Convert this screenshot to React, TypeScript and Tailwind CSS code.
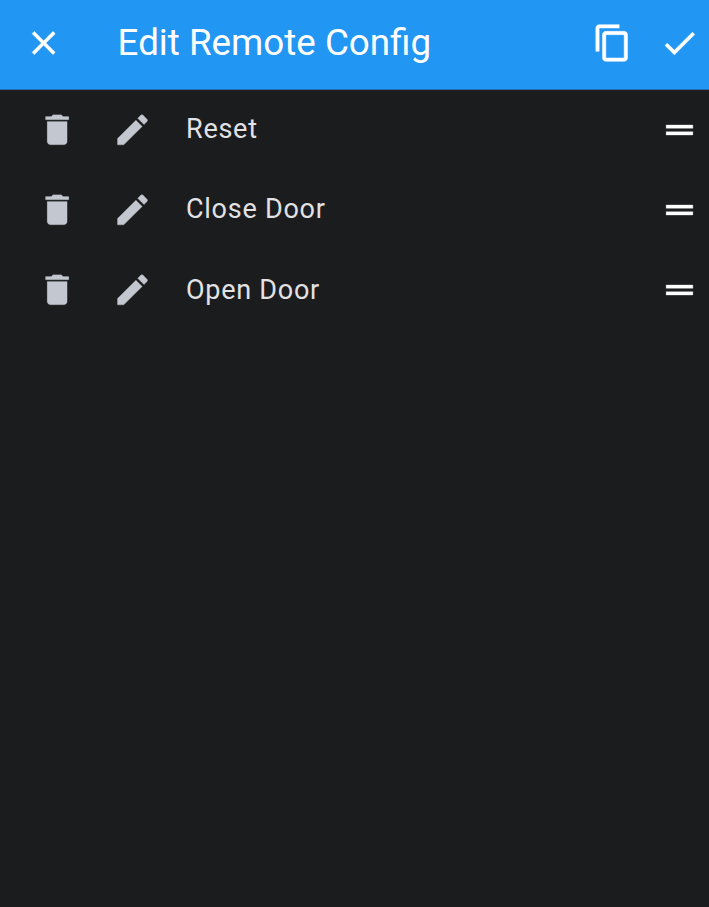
const paths = {
  close: "M19 6.41L17.59 5 12 10.59 6.41 5 5 6.41 10.59 12 5 17.59 6.41 19 12 13.41 17.59 19 19 17.59 13.41 12z",
  copy: "M16 1H4c-1.1 0-2 .9-2 2v14h2V3h12V1zm3 4H8c-1.1 0-2 .9-2 2v14c0 1.1.9 2 2 2h11c1.1 0 2-.9 2-2V7c0-1.1-.9-2-2-2zm0 16H8V7h11v14z",
  check: "M9 16.17L4.83 12l-1.42 1.41L9 19 21 7l-1.41-1.41z",
  trash: "M6 19c0 1.1.9 2 2 2h8c1.1 0 2-.9 2-2V7H6v12zM19 4h-3.5l-1-1h-5l-1 1H5v2h14V4z",
  edit: "M3 17.25V21h3.75L17.81 9.94l-3.75-3.75L3 17.25zM20.71 7.04c.39-.39.39-1.02 0-1.41l-2.34-2.34c-.39-.39-1.02-.39-1.41 0l-1.83 1.83 3.75 3.75 1.83-1.83z",
  handle: "M20 9H4v2h16V9zM4 15h16v-2H4v2z",
};

function Icon({ name, className, viewBox = "0 0 24 24" }: { name: keyof typeof paths; className: string; viewBox?: string }) {
  return (
    <svg viewBox={viewBox} fill="currentColor" className={`shrink-0 ${className}`}>
      <path d={paths[name]} />
    </svg>
  );
}

const items = ["Reset", "Close Door", "Open Door"];

export default function App() {
  return (
    <div className="h-[907px] w-full overflow-hidden bg-[#1b1c1e] font-[Roboto,sans-serif]">
      <header className="flex h-[90px] items-center border-b border-[#1e6dae] bg-[#2196f3] pb-[3px] pl-[24px] pr-[9px] text-white">
        <Icon name="close" viewBox="0.2 0 24 24" className="size-10 stroke-white stroke-[0.15]" />
        <h1 className="ml-[53.6px] flex-1 whitespace-nowrap text-[36.75px] leading-[44px]">Edit Remote Config</h1>
        <Icon name="copy" viewBox="-0.3 0 24 24" className="mr-[26.6px] size-10 stroke-white stroke-[0.3]" />
        <Icon name="check" viewBox="0 0.3 24 24" className="size-[41px] stroke-white stroke-[0.1]" />
      </header>
      <ul className="-mt-px">
        {items.map((item) => (
          <li key={item} className="flex h-[80.3px] items-center pl-[37px] pr-[10px] text-[#c3c7cf]">
            <Icon name="trash" viewBox="-0.1 0.1 24 24" className="mt-[1.2px] size-10 stroke-current stroke-[0.1]" />
            <Icon name="edit" viewBox="-0.3 0.1 24 24" className="ml-[35px] mt-[1.2px] size-10 stroke-current stroke-[0.2]" />
            <span className="ml-[34px] flex-1 text-[27px] leading-8 tracking-[0.74px] text-[#e2e2e5]">{item}</span>
            <Icon name="handle" viewBox="-0.3 0 24 24" className="mt-[1.2px] size-10 stroke-white stroke-[0.2] text-white" />
          </li>
        ))}
      </ul>
    </div>
  );
}
